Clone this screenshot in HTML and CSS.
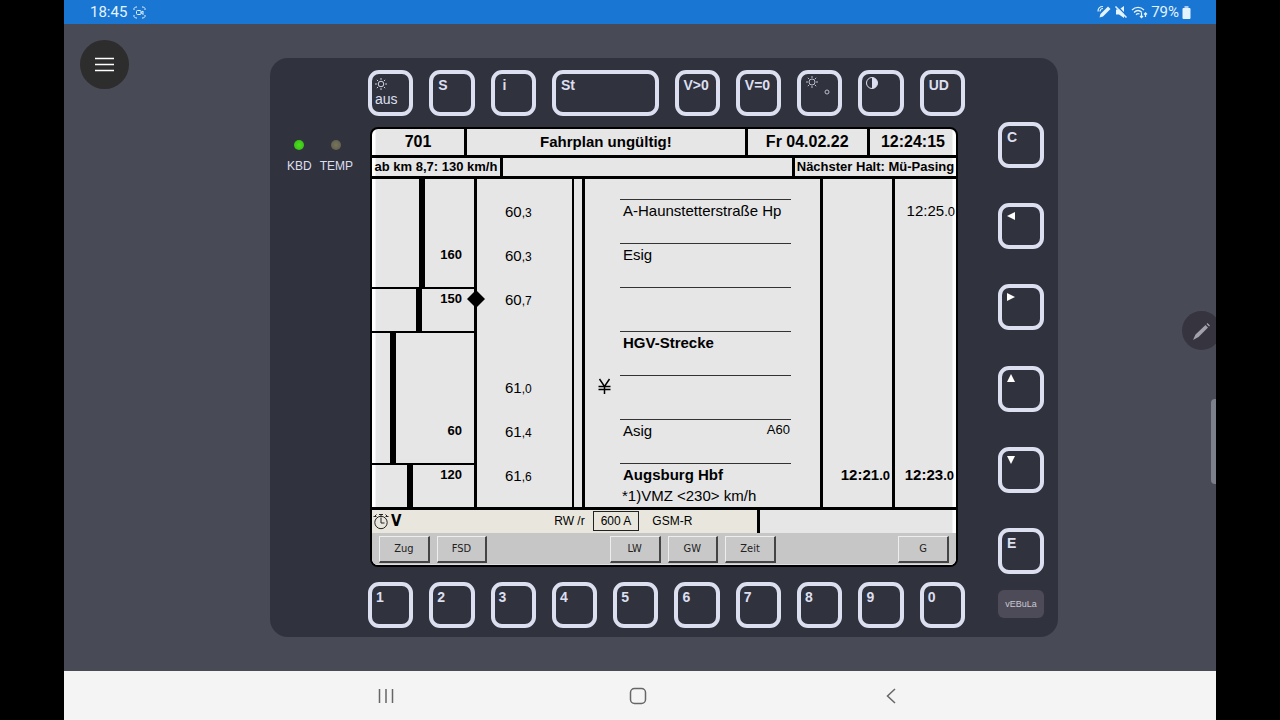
FILE: index.html
```html
<!DOCTYPE html>
<html lang="de">
<head>
<meta charset="utf-8">
<meta name="viewport" content="width=device-width, initial-scale=1">
<title>vEBuLa</title>
<link rel="stylesheet" href="styles.css">
</head>
<body>
<header class="status">
  <span class="status-group">
    <span>18:45</span>
    <svg class="cast" width="13" height="13" viewBox="0 0 13 13" fill="none" stroke="currentColor"><path d="M1 4V2.500L2.500 1H4M9 1h1.500L12 2.500V4M12 9v1.500L10.500 12H9M4 12H2.500L1 10.500V9"/><rect x="3.500" y="4.500" width="4.500" height="4" rx="1"/><path d="M8 6.500l2-1.500v3.500z"/></svg>
  </span>
  <span class="status-group status-right">
    <svg width="14" height="14" viewBox="0 0 14 14" fill="none" stroke="currentColor" stroke-width="1.200"><path d="M2.500 12.500l1-3.500 7.500-7.500 2.500 2.500L6 11.500z" fill="currentColor" stroke="none"/><path d="M1 6.500C1 3.500 3 1.500 6 1.500M3 6.500C3 4.800 4.300 3.500 6 3.500"/></svg>
    <svg width="14" height="14" viewBox="0 0 14 14" fill="currentColor"><path d="M2 4.500h3L10 1v12L5 9.500H2z"/><path d="M2.500 0.500l11 11" stroke="#1976d2" stroke-width="1.500"/><path d="M1.500 1.500l11 11" stroke="currentColor" stroke-width="1.500"/></svg>
    <svg width="17" height="14" viewBox="0 0 17 14" fill="none" stroke="currentColor" stroke-width="1.200"><path d="M1 5C4.500 1.500 9.500 1.500 13 5M3 7.500C5.500 5 8.500 5 11 7.500M5 9.700C6.300 8.500 7.500 8.500 8.500 9"/><path d="M10.500 8v4.500M9 11l1.500 1.700L12 11M14.500 12V8M13 9.500l1.500-1.700L16 9.500"/></svg>
    <span>79%</span>
    <svg width="9" height="13" viewBox="0 0 9 13" fill="currentColor"><path d="M2.500 0h4v2h-4z" opacity=".7"/><rect x="0.500" y="2" width="8" height="11" rx="1"/></svg>
  </span>
</header>

<main class="stage">
  <button class="menu" aria-label="Menü"><svg width="19" height="15" viewBox="0 0 19 15" stroke="#fff" stroke-width="1.600"><path d="M0 1.500h19M0 7.500h19M0 13.500h19"/></svg></button>

  <section class="device">
    <div class="leds">
      <div class="led"><i class="lamp lamp-on"></i>KBD</div>
      <div class="led"><i class="lamp"></i>TEMP</div>
    </div>

    <div class="center">
      <div class="keys">
        <button class="key key-aus"><svg class="sun" width="12" height="12" viewBox="0 0 13 13" fill="none" stroke="currentColor"><circle cx="6.500" cy="6.500" r="3"/><path d="M6.500 0v2M6.500 11v2M0 6.500h2M11 6.500h2M2 2l1.400 1.400M9.600 9.600L11 11M11 2L9.600 3.400M3.400 9.600L2 11"/></svg>aus</button>
        <button class="key">S</button>
        <button class="key key-i">i</button>
        <button class="key key-wide">St</button>
        <button class="key key-v">V&gt;0</button>
        <button class="key key-v">V=0</button>
        <button class="key" aria-label="Helligkeit"><svg width="26" height="22" viewBox="0 0 26 22" fill="none" stroke="currentColor" opacity=".8"><circle cx="6" cy="6" r="3"/><path d="M6 0v2M6 10v2M0 6h2M10 6h2M1.800 1.800l1.400 1.400M8.800 8.800l1.400 1.400M10.200 1.800L8.800 3.200M3.200 8.800l-1.400 1.400"/><circle cx="21" cy="16" r="2"/></svg></button>
        <button class="key key-contrast" aria-label="Kontrast"><svg width="14" height="14" viewBox="0 0 14 14"><circle cx="7" cy="7" r="5.500" fill="none" stroke="currentColor"/><path d="M7 1.500a5.500 5.500 0 0 1 0 11z" fill="currentColor"/></svg></button>
        <button class="key">UD</button>
      </div>

      <div class="screen">
        <div class="row head">
          <div class="train">701</div>
          <div class="notice">Fahrplan ungültig!</div>
          <div class="date">Fr 04.02.22</div>
          <div class="clock">12:24:15</div>
        </div>
        <div class="row sub">
          <div class="limit">ab km 8,7: 130 km/h</div>
          <div class="blank"></div>
          <div class="next">Nächster Halt: Mü-Pasing</div>
        </div>

        <table class="plan">
          <colgroup><col class="c-speed"><col class="c-km"><col class="c-band"><col class="c-stop"><col class="c-arr"><col class="c-dep"></colgroup>
          <tbody>
            <tr class="lead"><td class="speed v160"></td><td class="km"></td><td class="band"></td><td></td><td class="time"></td><td class="time"></td></tr>
            <tr><td class="speed v160"></td><td class="km">60<small>,3</small></td><td class="band"></td><td class="stop"><div class="line">A-Haunstetterstraße Hp</div></td><td class="time"></td><td class="time">12:25<small>.0</small></td></tr>
            <tr><td class="speed v160">160</td><td class="km">60<small>,3</small></td><td class="band"></td><td class="stop"><div class="line">Esig</div></td><td class="time"></td><td class="time"></td></tr>
            <tr><td class="speed v150 change">150<svg class="marker" width="18" height="18" viewBox="0 0 18 18"><path d="M9 0l9 9-9 9-9-9z"/></svg></td><td class="km">60<small>,7</small></td><td class="band"></td><td class="stop"><div class="line"></div></td><td class="time"></td><td class="time"></td></tr>
            <tr><td class="speed v60 change"></td><td class="km"></td><td class="band"></td><td class="stop"><div class="line"><b>HGV-Strecke</b></div></td><td class="time"></td><td class="time"></td></tr>
            <tr><td class="speed v60"></td><td class="km">61<small>,0</small></td><td class="band"></td><td class="stop"><svg class="yen" width="13" height="17" viewBox="0 0 13 17" fill="none" stroke="#000" stroke-width="1.500"><path d="M1.500 1l5 7.500L11.500 1M6.500 8v8M0.500 8.500h12M0.500 11.500h12"/></svg><div class="line"></div></td><td class="time"></td><td class="time"></td></tr>
            <tr><td class="speed v60">60</td><td class="km">61<small>,4</small></td><td class="band"></td><td class="stop"><div class="line">Asig<span class="exit">A60</span></div></td><td class="time"></td><td class="time"></td></tr>
            <tr><td class="speed v120 change">120</td><td class="km">61<small>,6</small></td><td class="band"></td><td class="stop"><div class="line"><b>Augsburg Hbf</b></div><div class="remark">*1)VMZ &lt;230&gt; km/h</div></td><td class="time"><b>12:21<small>.0</small></b></td><td class="time"><b>12:23<small>.0</small></b></td></tr>
          </tbody>
        </table>

        <div class="info">
          <div class="info-main">
            <svg width="16" height="17" viewBox="0 0 16 17" fill="none" stroke="#222"><circle cx="8" cy="9.500" r="6.200"/><path d="M6 1.500h4M8 1.500v3M8 5v5h3.500M1 4l2.500-2.500M15 4l-2.500-2.500M0.500 3.500h3M12.500 3.500h3" /></svg>
            <strong class="v">V</strong>
            <span class="mode">RW /r</span>
            <span class="amps">600 A</span>
            <span>GSM-R</span>
          </div>
          <div class="info-side"></div>
        </div>

        <div class="softkeys">
          <button class="soft">Zug</button>
          <button class="soft">FSD</button>
          <button class="soft soft-lw">LW</button>
          <button class="soft">GW</button>
          <button class="soft">Zeit</button>
          <button class="soft soft-g">G</button>
        </div>
      </div>

      <div class="keys digits">
        <button class="key">1</button><button class="key">2</button><button class="key">3</button><button class="key">4</button><button class="key">5</button><button class="key">6</button><button class="key">7</button><button class="key">8</button><button class="key">9</button><button class="key">0</button>
      </div>
    </div>

    <div class="side">
      <div class="side-keys">
        <button class="key">C</button>
        <button class="key" aria-label="Links"><svg width="8" height="14" viewBox="0 0 8 14" fill="#fff"><path d="M0 7l8-4v8z"/></svg></button>
        <button class="key" aria-label="Rechts"><svg width="8" height="14" viewBox="0 0 8 14" fill="#fff"><path d="M8 7L0 3v8z"/></svg></button>
        <button class="key" aria-label="Auf"><svg width="8" height="14" viewBox="0 0 8 14" fill="#fff"><path d="M4 2l4 8H0z"/></svg></button>
        <button class="key" aria-label="Ab"><svg width="8" height="14" viewBox="0 0 8 14" fill="#fff"><path d="M4 11l4-8H0z"/></svg></button>
        <button class="key">E</button>
      </div>
      <button class="brand">vEBuLa</button>
    </div>
  </section>

  <button class="pen" aria-label="Stift"><svg width="20" height="20" viewBox="0 0 20 20" fill="#a3a1aa"><path d="M1 19l2.500-5.500L13.500 4l2.500 2.500L6.500 16zM14.500 3l1-1 2.500 2.500-1 1z"/></svg></button>
  <div class="edge"></div>
</main>

<nav class="nav">
  <button aria-label="Übersicht"><svg width="16" height="16" viewBox="0 0 16 16" stroke="currentColor" stroke-width="1.500"><path d="M1.500 1v14M8 1v14M14.500 1v14"/></svg></button>
  <button aria-label="Start"><svg width="18" height="18" viewBox="0 0 18 18" fill="none" stroke="currentColor" stroke-width="1.500"><rect x="1.500" y="1.500" width="15" height="15" rx="4"/></svg></button>
  <button aria-label="Zurück"><svg width="10" height="16" viewBox="0 0 10 16" fill="none" stroke="currentColor" stroke-width="1.500"><path d="M9 1L1.500 8 9 15"/></svg></button>
</nav>
</body>
</html>
```
FILE: styles.css
```css
* { box-sizing: border-box; }
body {
  margin: 0;
  min-height: 100vh;
  padding: 0 5vw;
  display: flex;
  flex-direction: column;
  background: #000;
  font-family: "Liberation Sans", Arial, sans-serif;
}
button {
  margin: 0;
  padding: 0;
  border: 0;
  background: none;
  color: inherit;
  font: inherit;
}
svg { display: block; flex: none; }

.status {
  height: 24px;
  padding: 0 25px 0 26px;
  display: flex;
  justify-content: space-between;
  align-items: center;
  background: #1976d2;
  color: #e4f4ff;
  font: 15px/24px Roboto, sans-serif;
}
.status-group { display: flex; align-items: center; gap: 6px; }
.status-right { gap: 3px; }

.stage {
  position: relative;
  flex: 1;
  padding: 34px 0 34px 48px;
  overflow: hidden;
  background: #484a55;
}
.menu {
  position: absolute;
  left: 16px;
  top: 16px;
  width: 49px;
  height: 49px;
  display: grid;
  place-items: center;
  border-radius: 50%;
  background: #2d2d2d;
}
.pen {
  position: absolute;
  right: -5px;
  top: 287px;
  width: 39px;
  height: 39px;
  display: grid;
  place-items: center;
  border-radius: 50%;
  background: #35343f;
}
.edge {
  position: absolute;
  right: -5px;
  top: 375px;
  width: 10px;
  height: 85px;
  border-radius: 4px;
  background: #7c808b;
}

.device {
  max-width: 788px;
  margin: 0 auto;
  padding: 12px 14px 9px 17px;
  display: flex;
  border-radius: 18px;
  background: #30333e;
  color: #dcdff0;
}
.leds {
  width: 81px;
  padding-top: 70px;
  display: flex;
  align-items: flex-start;
  gap: 8px;
  font-size: 12px;
  line-height: 14px;
}
.led { display: flex; flex-direction: column; align-items: center; gap: 9px; }
.lamp { width: 10px; height: 10px; border-radius: 50%; background: radial-gradient(#77755a, #5c5a4c); }
.lamp-on { background: radial-gradient(#4be01c, #35b516); }

.center { flex: 1; min-width: 0; }
.keys {
  display: grid;
  grid-template-columns: repeat(10, minmax(0, 1fr));
  column-gap: 16px;
}
.key {
  height: 46px;
  padding: 2px 5px;
  display: flex;
  flex-direction: column;
  align-items: flex-start;
  border: 4px solid #dcdff0;
  border-radius: 11px;
  font-size: 14px;
  line-height: 18px;
  font-weight: bold;
  white-space: nowrap;
}
.key-wide { grid-column: span 2; }
.key-i { padding-left: 8px; }
.key-aus { padding: 4px 3px; font-weight: normal; }
.key-contrast { padding-left: 3px; }
.digits .key { padding-left: 4px; }

.screen {
  margin: 11px 7px 15px 2px;
  border: 2px solid #000;
  border-radius: 8px;
  overflow: hidden;
  background: linear-gradient(90deg, #fff 3px, #e6e6e6 4px calc(100% - 4px), #fff calc(100% - 3px));
  color: #000;
}
.row { display: grid; border-bottom: 3px solid #000; text-align: center; font-weight: bold; white-space: nowrap; }
.row > * + * { border-left: 3px solid #000; }
.head {
  grid-template-columns: 92fr 280fr 122fr 89fr;
  font-size: 16px;
  line-height: 26px;
}
.notice { font-size: 15px; }
.sub {
  grid-template-columns: 128px 1fr 164px;
  font-size: 13px;
  line-height: 18px;
}

.plan { width: 100%; table-layout: fixed; border-collapse: separate; border-spacing: 0; }
.c-speed { width: 102px; }
.c-km { width: 98px; }
.c-band { width: 10px; }
.c-arr { width: 72px; }
.c-dep { width: 64px; }
.plan tr { height: 44px; }
.plan .lead { height: 20px; }
.plan td { padding: 0; vertical-align: top; white-space: nowrap; }
.plan td + td { border-left: 3px solid #000; }
.plan td.band { border-left-width: 2px; }
.plan .speed {
  position: relative;
  padding: 4px 12px 0 0;
  text-align: right;
  font-size: 13px;
  line-height: 16px;
  font-weight: bold;
  background: linear-gradient(#000, #000) no-repeat 47px 0 / 6px 100%;
}
.plan .v150 { background-position: 44px 0; }
.plan .v60 { background-position: 18px 0; }
.plan .v120 { background-position: 35px 0; }
.plan .change { padding-top: 2px; border-top: 2px solid #000; }
.marker { position: absolute; right: -11px; top: 1px; z-index: 1; }
.plan .km { padding: 4px 0 0 28px; font-size: 15px; line-height: 18px; }
.plan small { font-size: 13px; }
.plan .km small { font-size: 12px; }
.plan .stop { position: relative; padding: 0 29px 0 35px; font-size: 15px; }
.line {
  padding: 2px 1px 0 3px;
  display: flex;
  justify-content: space-between;
  border-top: 1px solid #333;
  line-height: 18px;
}
.exit { font-size: 13px; line-height: 15px; }
.remark { padding: 4px 0 0 2px; line-height: 16px; }
.yen { position: absolute; left: 13px; top: 3px; }
.plan .time { padding: 3px 1px 0 0; text-align: right; font-size: 15px; line-height: 18px; }
.time b { padding-right: 1px; }

.info { display: flex; height: 26px; border-top: 3px solid #000; }
.info-main {
  flex: 385;
  display: flex;
  align-items: center;
  padding: 0 0 1px 1px;
  background: #e9e7dd;
  font-size: 12px;
  line-height: 16px;
}
.info-side { flex: 196; border-left: 3px solid #000; }
.v { padding-left: 2px; font: bold 15px/16px "DejaVu Sans Condensed", sans-serif; }
.mode { margin-left: auto; }
.amps { margin: 0 13px 0 8px; padding: 1px 7px; border: 1px solid #222; }
.info-main > :last-child { margin-right: 65px; }

.softkeys {
  padding: 3px 7px 1px;
  display: grid;
  grid-template-columns: repeat(10, minmax(0, 1fr));
  column-gap: 7px;
  background: #c6c6c6;
  border-bottom: 1px solid #dedede;
}
.soft {
  height: 27px;
  border: solid;
  border-width: 1px 2px 2px 1px;
  border-color: #eee #444 #444 #eee;
  background: #c8c8c8;
  font: 11px/22px "DejaVu Sans Condensed", "DejaVu Sans", sans-serif;
  color: #222;
}
.soft-lw { grid-column: 5; }
.soft-g { grid-column: 10; }

.side {
  width: 46px;
  margin-left: 33px;
  padding: 52px 0 10px;
  display: flex;
  flex-direction: column;
}
.side-keys { flex: 1; display: flex; flex-direction: column; justify-content: space-between; }
.side .key { width: 100%; }
.brand {
  height: 28px;
  margin-top: 16px;
  border-radius: 6px;
  background: #4d4b57;
  font-size: 9px;
  color: #c9c9d4;
}

.nav {
  height: 49px;
  padding-right: 3px;
  display: grid;
  grid-template-columns: repeat(3, 22%);
  justify-content: center;
  background: #f4f4f4;
  color: #666;
}
.nav button { display: grid; place-items: center; }
```
